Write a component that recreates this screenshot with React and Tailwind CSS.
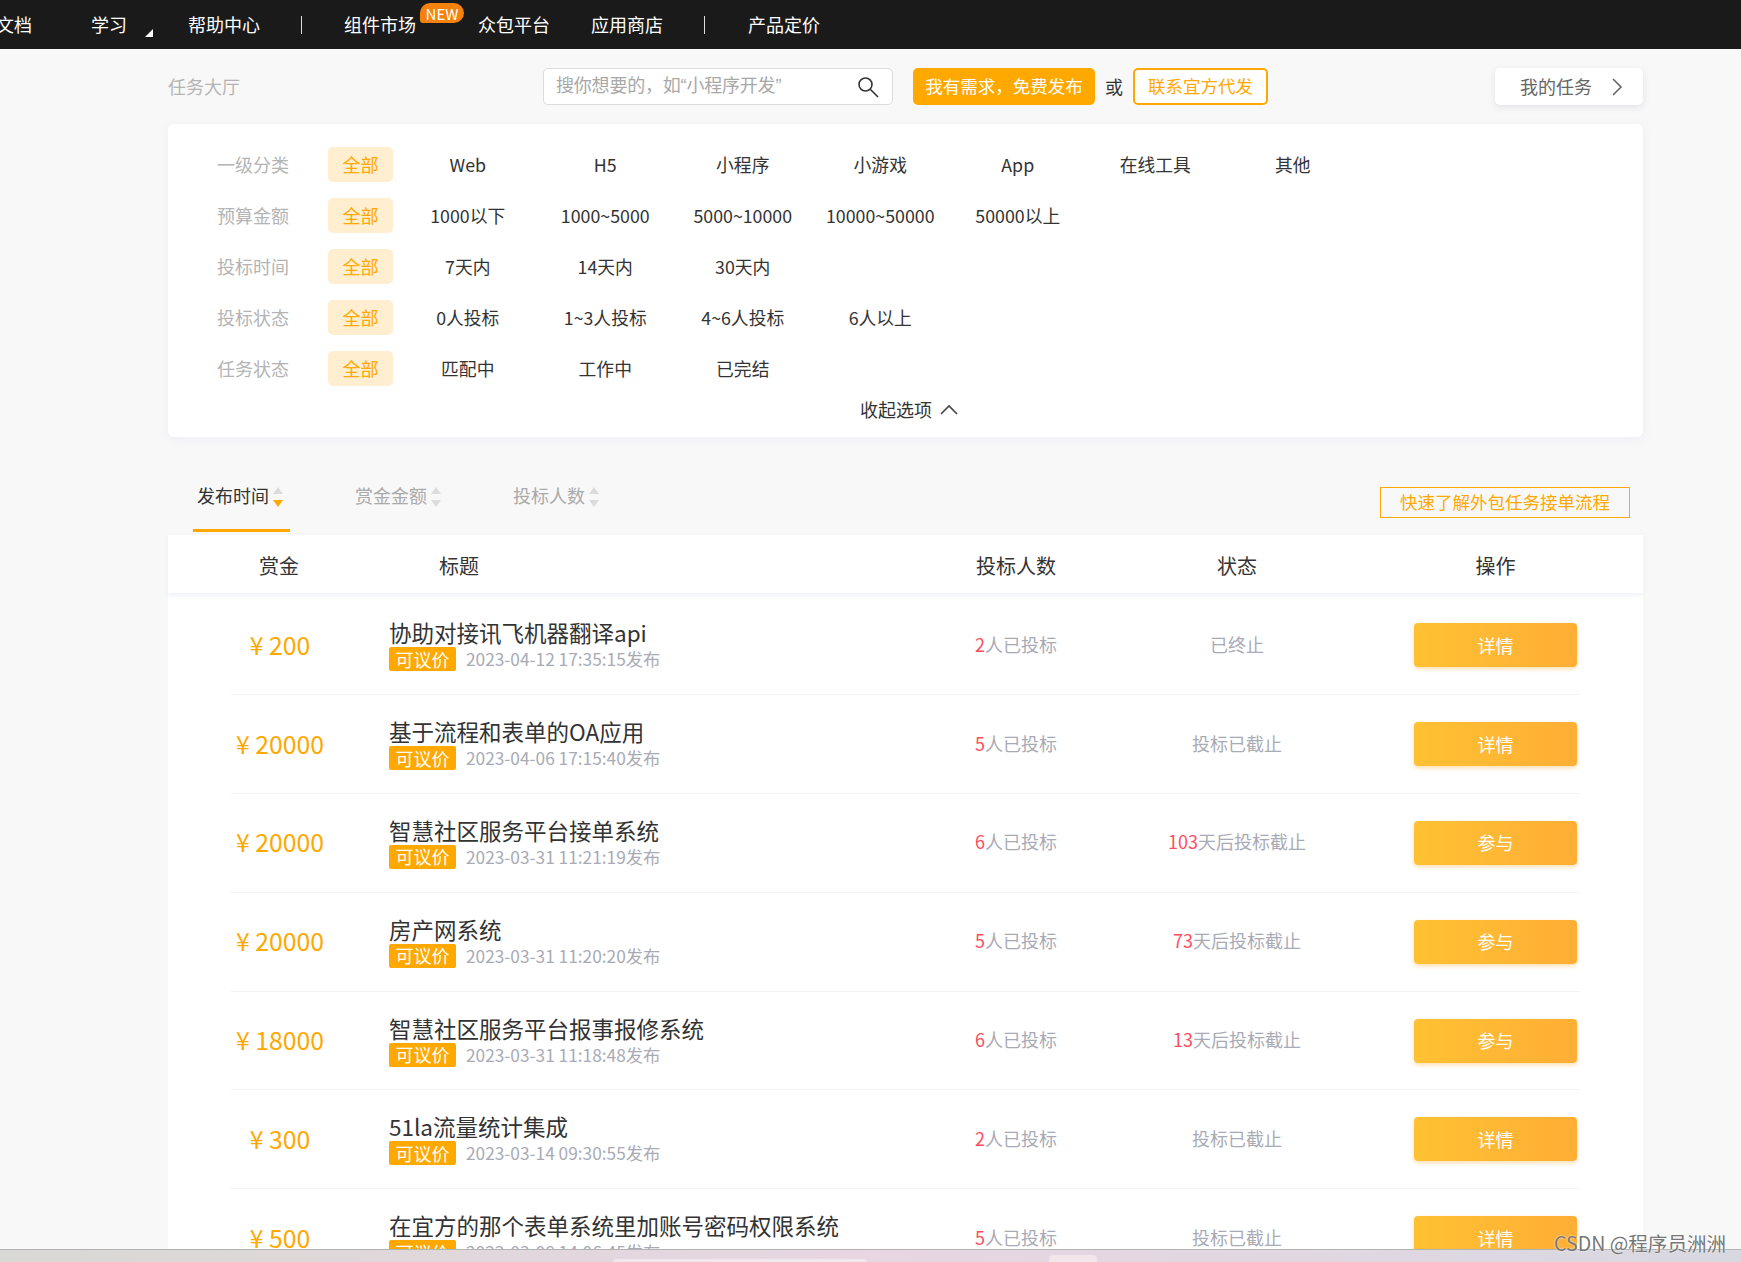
import React from "react";

const filters = [
  ["一级分类", ["Web", "H5", "小程序", "小游戏", "App", "在线工具", "其他"]],
  ["预算金额", ["1000以下", "1000~5000", "5000~10000", "10000~50000", "50000以上"]],
  ["投标时间", ["7天内", "14天内", "30天内"]],
  ["投标状态", ["0人投标", "1~3人投标", "4~6人投标", "6人以上"]],
  ["任务状态", ["匹配中", "工作中", "已完结"]],
];

const rows = [
  ["200", "协助对接讯飞机器翻译api", "2023-04-12 17:35:15发布", "2", "", "已终止", "详情"],
  ["20000", "基于流程和表单的OA应用", "2023-04-06 17:15:40发布", "5", "", "投标已截止", "详情"],
  ["20000", "智慧社区服务平台接单系统", "2023-03-31 11:21:19发布", "6", "103", "天后投标截止", "参与"],
  ["20000", "房产网系统", "2023-03-31 11:20:20发布", "5", "73", "天后投标截止", "参与"],
  ["18000", "智慧社区服务平台报事报修系统", "2023-03-31 11:18:48发布", "6", "13", "天后投标截止", "参与"],
  ["300", "51la流量统计集成", "2023-03-14 09:30:55发布", "2", "", "投标已截止", "详情"],
  ["500", "在宜方的那个表单系统里加账号密码权限系统", "2023-03-08 14:06:45发布", "5", "", "投标已截止", "详情"],
];

function Sort({ active }) {
  return (
    <svg width="10" height="20" viewBox="0 0 10 20" className="ml-[4px] shrink-0">
      <path d="M5 0L10 7H0Z" fill="#dcdcdc" />
      <path d="M5 20L10 13H0Z" fill={active ? "#ffa800" : "#dcdcdc"} />
    </svg>
  );
}

function Tab({ label, active }) {
  return (
    <div className={active ? "mr-[61px] flex h-[53px] w-[97px] items-start border-b-[3px] border-[#ffa800] pl-1 text-[#333]" : "mr-[61px] flex h-[53px] w-[97px] items-start pl-1 text-[#aaa]"}>
      <div className="flex h-[35px] items-center whitespace-nowrap text-[18px]">
        <span className="mt-[-2px]">{label}</span>
        <Sort active={active} />
      </div>
    </div>
  );
}

function Nav({ children, className }) {
  return <span className={"relative shrink-0 whitespace-nowrap " + className}>{children}</span>;
}

export default function App() {
  return (
    <div className="relative flex h-[1262px] flex-col overflow-hidden bg-[#f8f8f8] font-['Noto_Sans_CJK_SC','Noto_Sans',sans-serif] text-[18px] font-normal text-[#333]">
      <header className="flex h-[49px] shrink-0 items-center bg-[#1a1a1a] text-[18px] font-normal text-white">
        <Nav className="ml-[-4px] w-[36px]">文档</Nav>
        <Nav className="ml-[59px] w-[36px]">
          学习
          <svg width="8" height="8" viewBox="0 0 8 8" className="absolute left-[54px] top-[18px]">
            <path d="M8 0V8H0Z" fill="#fff" />
          </svg>
        </Nav>
        <Nav className="ml-[61px] w-[72px]">帮助中心</Nav>
        <span className="ml-[41px] h-[18px] w-px bg-[#ddd]" />
        <Nav className="ml-[42px] w-[72px]">
          组件市场
          <span className="absolute left-[76px] top-[-8px] flex h-[20px] w-[44px] items-center justify-center rounded-[10px_10px_10px_3px] bg-[#f6820d] text-[15px] leading-none">NEW</span>
        </Nav>
        <Nav className="ml-[62px] w-[72px]">众包平台</Nav>
        <Nav className="ml-[41px] w-[72px]">应用商店</Nav>
        <span className="ml-[41px] h-[18px] w-px bg-[#ddd]" />
        <Nav className="ml-[43px] w-[72px]">产品定价</Nav>
      </header>

      <main className="ml-[168px] min-h-0 w-[1475px] flex-1">
        <div className="mt-[19px] flex h-[37px] items-center">
          <div className="w-[375px] text-[#b4b4b4]">任务大厅</div>
          <div className="flex h-[37px] w-[350px] items-center justify-between rounded-[5px] border border-[#dcdcdc] bg-white pl-[12px] pr-[12px] text-[#a8a8a8]">
            <span className="mt-[-1px] font-['Liberation_Sans','Noto_Sans_CJK_SC',sans-serif] tracking-[-0.2px]">搜你想要的，如“小程序开发”</span>
            <svg width="24" height="24" viewBox="0 0 24 24" fill="none" stroke="#333" strokeWidth="1.6">
              <circle cx="9.5" cy="9.5" r="6.5" />
              <path d="M14.5 14.5L22 22" />
            </svg>
          </div>
          <button className="ml-[20px] h-[37px] w-[182px] rounded-[5px] bg-[#ffa800] text-[17.5px] text-white">我有需求，免费发布</button>
          <span className="ml-[10px] w-[18px]">或</span>
          <button className="ml-[10px] h-[37px] w-[135px] rounded-[5px] border-2 border-[#ffa800] bg-white text-[17.5px] text-[#ffa800]">联系宜方代发</button>
          <div className="ml-auto flex h-[37px] w-[148px] items-center rounded-[5px] bg-white pl-[25px] text-[#666] shadow-[0_2px_6px_rgba(200,200,210,0.45)]">
            我的任务
            <svg width="12" height="18" viewBox="0 0 12 18" fill="none" stroke="#666" strokeWidth="1.6" className="ml-[19px]">
              <path d="M2 1L10 9L2 17" />
            </svg>
          </div>
        </div>

        <section className="mt-[19px] h-[313px] rounded-[6px] bg-white pt-[23px] shadow-[0_2px_8px_rgba(230,232,245,0.6)]">
          {filters.map(([label, options]) => (
            <div key={label} className="mb-[16px] flex h-[35px] items-center">
              <div className="w-[160px] pl-[49px] text-[#b4b4b4]">{label}</div>
              <div className="flex h-[35px] w-[65px] items-center justify-center rounded-[5px] bg-[#ffeecf] text-[#ffa800]">全部</div>
              <div className="ml-[6px] flex">
                {options.map((o) => (
                  <div key={o} className="w-[137.5px] whitespace-nowrap text-center text-[17.8px]">{o}</div>
                ))}
              </div>
            </div>
          ))}
          <div className="mt-[-6px] flex h-[26px] items-center justify-center pl-[7px]">
            <span>收起选项</span>
            <svg width="18" height="11" viewBox="0 0 18 11" fill="none" stroke="#444" strokeWidth="1.6" className="ml-[8px]">
              <path d="M1 10L9 2L17 10" />
            </svg>
          </div>
        </section>

        <div className="flex h-[98px] items-start justify-between pl-[25px] pr-[13px] pt-[42px]">
          <div className="flex">
            <Tab label="发布时间" active />
            <Tab label="赏金金额" />
            <Tab label="投标人数" />
          </div>
          <div className="mt-[8px] flex h-[31px] w-[250px] items-center justify-center border border-[#ffa800] text-[17.5px] text-[#ffa800]">快速了解外包任务接单流程</div>
        </div>

        <section className="bg-white">
          <div className="grid h-[58px] grid-cols-[158px_517px_220px_222px_1fr] items-center px-[63px] pt-[4px] text-[20px] shadow-[0_2px_5px_rgba(230,232,245,0.7)]">
            <div className="w-[96px] text-center">赏金</div>
            <div className="pl-[50px]">标题</div>
            <div className="text-center">投标人数</div>
            <div className="text-center">状态</div>
            <div className="flex justify-end pr-[3px]"><span className="w-[163px] text-center">操作</span></div>
          </div>
          <div className="mx-[63px] pt-[3.5px]">
            {rows.map(([price, title, date, n, days, status, action]) => (
              <div key={title} className="grid h-[98.8px] grid-cols-[158px_517px_220px_222px_1fr] items-center border-b border-[#f2f2f2]">
                <div className="mt-[-2px] w-[98px] whitespace-nowrap text-center text-[24.8px] text-[#ffa800]">¥ {price}</div>
                <div>
                  <div className="whitespace-nowrap text-[22.5px] leading-[28px] text-[#333]">{title}</div>
                  <div className="flex items-center">
                    <span className="flex h-[24px] w-[67px] items-center justify-center rounded-[2px] bg-[#ffa800] text-white">可议价</span>
                    <span className="ml-[10px] text-[17.3px] text-[#a8abb5]">{date}</span>
                  </div>
                </div>
                <div className="mt-[-2px] text-center text-[#a8abb5]"><span className="text-[#ff4d5e]">{n}</span>人已投标</div>
                <div className="mt-[-2px] text-center text-[#a8abb5]">{days && <span className="text-[#ff4d5e]">{days}</span>}{status}</div>
                <div className="flex justify-end pr-[3px]">
                  <button className="h-[44px] w-[163px] rounded-[4px] bg-gradient-to-r from-[#ffc133] to-[#ffae35] text-white shadow-[0_2px_4px_rgba(255,174,53,0.4)]">{action}</button>
                </div>
              </div>
            ))}
          </div>
        </section>
      </main>

      <footer className="relative z-10 h-[13px] shrink-0 border-t border-[#b3b3b3] bg-gradient-to-r from-[#d8d8d4] via-[#e8d6e2] to-[#d8d8e0]">
        <div className="absolute left-[613px] top-[9px] h-[4px] w-[254px] rounded-t-[6px] bg-[#f0e8ec]" />
        <div className="absolute left-[1049px] top-[5px] h-[8px] w-[48px] rounded-t-[4px] bg-[#f2e6ea]" />
      </footer>
      <div className="absolute left-[1554px] top-[1228px] z-20 whitespace-nowrap text-[19.6px] text-[#777] [text-shadow:0_0_2px_#fff]">CSDN @程序员洲洲</div>
    </div>
  );
}
